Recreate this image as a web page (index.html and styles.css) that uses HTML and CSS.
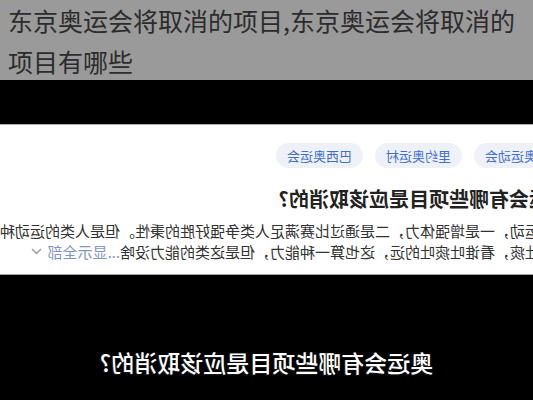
FILE: index.html
```html
<!DOCTYPE html>
<html lang="zh-CN">
<head>
<meta charset="utf-8">
<title>东京奥运会将取消的项目</title>
<link rel="stylesheet" href="styles.css">
</head>
<body>
<header class="band">
  <h1 class="band-title">东京奥运会将取消的项目,东京奥运会将取消的项目有哪些</h1>
</header>
<main class="stage">
  <div class="gap-top"></div>
  <section class="shot">
    <div class="chips">
      <span class="chip">残奥运动会</span>
      <span class="chip">里约奥运村</span>
      <span class="chip">巴西奥运会</span>
    </div>
    <h2 class="q-title">奥运会有哪些项目是应该取消的?</h2>
    <div class="para">
      <div class="line">运动，一是增强体力，二是通过比赛满足人类争强好胜的秉性。但是人类的运动种</div>
      <div class="line">吐痰，看谁吐痰吐的远，这也算一种能力，但是这类的能力没啥<span class="more">...显示全部</span><svg class="chev" width="11" height="7" viewBox="0 0 11 7"><path d="M1 1 L5.5 5.5 L10 1" fill="none" stroke="#9a9a9a" stroke-width="1.4"/></svg></div>
    </div>
  </section>
  <p class="caption">奥运会有哪些项目是应该取消的?</p>
</main>
</body>
</html>
```
FILE: styles.css
```css
* { box-sizing: border-box; }
html, body { margin: 0; padding: 0; }
body {
  width: 533px;
  height: 400px;
  overflow: hidden;
  background: #000;
  font-family: "Noto Sans CJK SC", "Noto Sans", sans-serif;
}
.band {
  height: 80px;
  background: #9a9a9a;
  overflow: hidden;
  padding: 0 0 0 8px;
}
.band-title {
  margin: 0;
  font-size: 25px;
  font-weight: 400;
  line-height: 41px;
  color: #2c2c2c;
  white-space: normal;
  word-break: break-all;
}
.stage {
  height: 320px;
  background: #000;
  display: flex;
  flex-direction: column;
  transform: scaleX(-1);
}
.gap-top { height: 44px; flex: none; }
.shot {
  flex: none;
  height: 151px;
  background: #fff;
  border-top: 1px solid #b0b0b0;
  border-bottom: 1px solid #a0a0a0;
  overflow: hidden;
  padding-top: 18px;
}
.chips {
  display: flex;
  gap: 12px;
  margin-left: -28px;
}
.chip {
  flex: none;
  height: 25px;
  line-height: 25px;
  padding: 0 11px;
  border-radius: 13px;
  background: #eef2f8;
  color: #3f6fc9;
  font-size: 13px;
  white-space: nowrap;
}
.q-title {
  margin: 17px 0 0 -36px;
  font-size: 20px;
  font-weight: 700;
  line-height: 28px;
  color: #222;
  white-space: nowrap;
}
.para {
  margin: 7px 0 0 -7px;
  font-size: 15px;
  line-height: 21px;
  color: #333;
}
.line {
  white-space: nowrap;
  display: flex;
  align-items: center;
}
.more { color: #8494c4; }
.chev { margin-left: 5px; flex: none; }
.caption {
  margin: 72px 0 0;
  text-align: center;
  font-size: 23px;
  line-height: 30px;
  color: #fff;
  font-weight: 500;
  text-shadow: 0 0 2px #000, 1px 1px 0 #222;
}
```
